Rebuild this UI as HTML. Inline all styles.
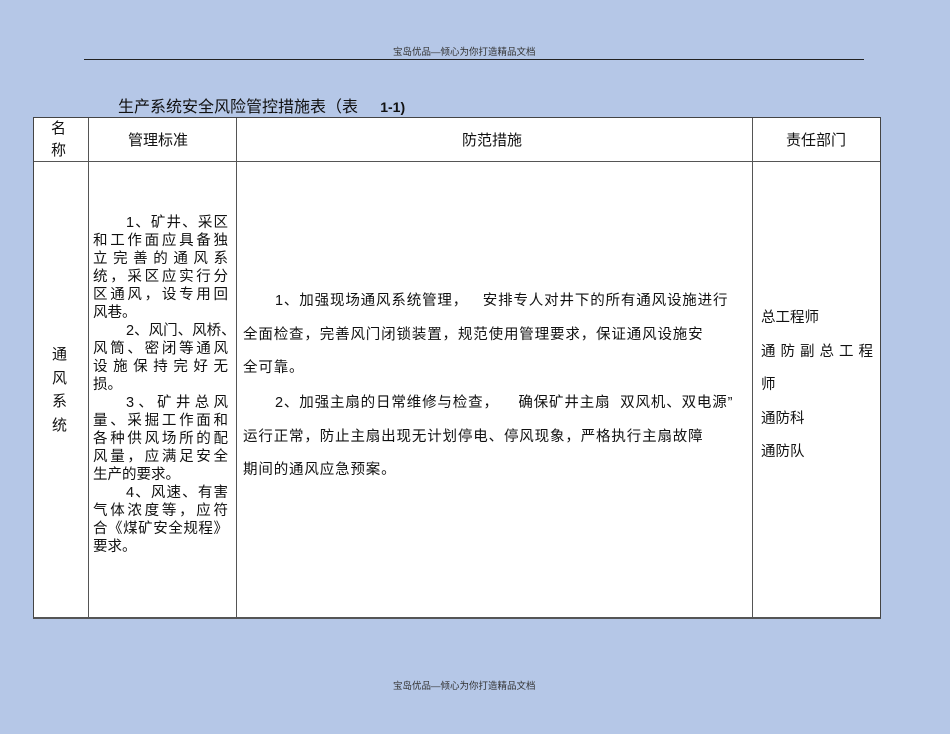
<!DOCTYPE html>
<html><head><meta charset="utf-8"><style>
*{margin:0;padding:0;box-sizing:border-box}
body{width:950px;height:734px;background:#b5c7e7;position:relative;overflow:hidden;font-family:"Liberation Sans","Noto Sans CJK SC",sans-serif;color:#111}
.a{position:absolute;white-space:nowrap}
.hd{font-size:9.5px;color:#333}
.tbl{position:absolute;left:33px;top:117px;width:848px;height:502px;background:#fff;border:1.5px solid #444;border-bottom:2px solid #555}
.v{position:absolute;top:0;bottom:0;width:1px;background:#555}
.h{position:absolute;left:0;right:0;height:1px;background:#555;top:43px}
.c2{position:absolute;left:93px;width:135px;font-size:14.5px;line-height:18px;height:18px;text-align:justify;text-align-last:justify;white-space:nowrap}
.c2.l{text-align-last:left}
.c3{position:absolute;font-size:14.5px;letter-spacing:0.85px;white-space:nowrap;line-height:18px}
.c4{position:absolute;left:761px;font-size:14.5px;line-height:18px;white-space:nowrap}
</style></head><body>
<div class="a hd" style="left:393px;top:44px">宝岛优品—倾心为你打造精品文档</div>
<div class="a" style="left:84px;top:59px;width:780px;height:1px;background:#222"></div>
<div class="a" style="left:118px;top:93px;font-size:16px">生产系统安全风险管控措施表（表&nbsp;&nbsp;&nbsp;&nbsp;&nbsp;<b style="font-size:14px">1-1)</b></div>
<div class="tbl">
<div class="v" style="left:54px"></div>
<div class="v" style="left:202px"></div>
<div class="v" style="left:718px"></div>
<div class="h"></div>
</div>
<div class="a" style="left:51px;top:118px;font-size:15px;line-height:22px">名<br>称</div>
<div class="a" style="left:128px;top:129px;font-size:15px">管理标准</div>
<div class="a" style="left:462px;top:129px;font-size:15px">防范措施</div>
<div class="a" style="left:786px;top:129px;font-size:15px">责任部门</div>
<div class="a" style="left:52px;top:343px;font-size:15px;line-height:23.5px">通<br>风<br>系<br>统</div>

<div class="c2" style="top:214px;left:126px;width:102px">1、矿井、采区</div>
<div class="c2" style="top:232px">和工作面应具备独</div>
<div class="c2" style="top:250px">立完善的通风系</div>
<div class="c2" style="top:268px">统，采区应实行分</div>
<div class="c2" style="top:286px">区通风，设专用回</div>
<div class="c2 l" style="top:304px">风巷。</div>
<div class="c2" style="top:322px;left:126px;width:102px">2、风门、风桥、</div>
<div class="c2" style="top:340px">风筒、密闭等通风</div>
<div class="c2" style="top:358px">设施保持完好无</div>
<div class="c2 l" style="top:376px">损。</div>
<div class="c2" style="top:394px;left:126px;width:102px">3、矿井总风</div>
<div class="c2" style="top:412px">量、采掘工作面和</div>
<div class="c2" style="top:430px">各种供风场所的配</div>
<div class="c2" style="top:448px">风量，应满足安全</div>
<div class="c2 l" style="top:466px">生产的要求。</div>
<div class="c2" style="top:484px;left:126px;width:102px">4、风速、有害</div>
<div class="c2" style="top:502px">气体浓度等，应符</div>
<div class="c2" style="top:520px">合《煤矿安全规程》</div>
<div class="c2 l" style="top:538px">要求。</div>

<div class="c3" style="left:275px;top:292px">1、加强现场通风系统管理，&nbsp;&nbsp;&nbsp;安排专人对井下的所有通风设施进行</div>
<div class="c3" style="left:243px;top:326px">全面检查，完善风门闭锁装置，规范使用管理要求，保证通风设施安</div>
<div class="c3" style="left:243px;top:359px">全可靠。</div>
<div class="c3" style="left:275px;top:394px">2、加强主扇的日常维修与检查，&nbsp;&nbsp;&nbsp;&nbsp;确保矿井主扇&nbsp;&nbsp;双风机、双电源”</div>
<div class="c3" style="left:243px;top:428px">运行正常，防止主扇出现无计划停电、停风现象，严格执行主扇故障</div>
<div class="c3" style="left:243px;top:461px">期间的通风应急预案。</div>

<div class="c4" style="top:309px">总工程师</div>
<div class="c4" style="top:343px;letter-spacing:5px">通防副总工程</div>
<div class="c4" style="top:376px">师</div>
<div class="c4" style="top:410px">通防科</div>
<div class="c4" style="top:443px">通防队</div>

<div class="a hd" style="left:393px;top:678px">宝岛优品—倾心为你打造精品文档</div>
</body></html>
